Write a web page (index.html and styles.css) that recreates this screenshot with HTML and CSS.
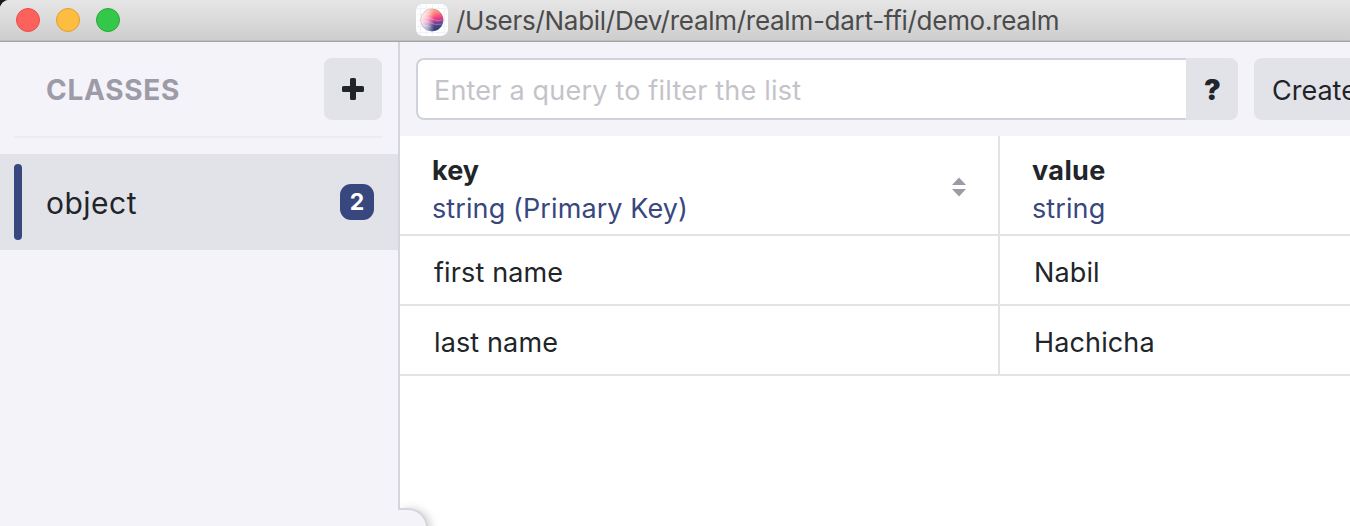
FILE: index.html
```html
<!DOCTYPE html>
<html lang="en">
<head>
<meta charset="utf-8">
<title>demo.realm</title>
<link rel="stylesheet" href="styles.css">
</head>
<body>
<div class="window">
  <header class="titlebar">
    <div class="lights"><i class="light close"></i><i class="light minimize"></i><i class="light maximize"></i></div>
    <svg class="app-icon" width="32" height="32" viewBox="0 0 32 32">
      <defs>
        <linearGradient id="globe" x1="0.35" y1="0" x2="0.55" y2="1">
          <stop offset="0" stop-color="#fcb98c"/><stop offset=".25" stop-color="#fb7f7b"/><stop offset=".46" stop-color="#f0407f"/><stop offset=".6" stop-color="#a83c96"/><stop offset=".76" stop-color="#484888"/><stop offset="1" stop-color="#333b70"/>
        </linearGradient>
        <linearGradient id="haze"><stop offset="0" stop-color="#fff" stop-opacity=".9"/><stop offset=".3" stop-color="#fff" stop-opacity=".6"/><stop offset=".6" stop-color="#fff" stop-opacity="0"/></linearGradient>
      </defs>
      <rect width="32" height="32" rx="7" fill="#fff"/>
      <path d="M4.500 1v30M10.500 1v30M16.500 1v30M22.500 1v30M28.500 1v30M1 4.500h30M1 10.500h30M1 16.500h30M1 22.500h30M1 28.500h30" stroke="#f0f0f7"/>
      <circle cx="16" cy="16" r="11.300" fill="url(#globe)"/>
      <circle cx="16" cy="16" r="11.500" fill="url(#haze)"/>
      <path d="M6 10.500q5 1 9-.5M4.800 14q6-2 11 1t11 1M4.800 18q5-2 10 1t11 1M7 22q4-1 8 1" fill="none" stroke="#fff" stroke-opacity=".35" stroke-width=".8"/>
      <circle cx="16" cy="16" r="11.200" fill="none" stroke="#73669d" stroke-opacity=".35" stroke-width=".6"/>
    </svg>
    <span class="title">/Users/Nabil/Dev/realm/realm-dart-ffi/demo.realm</span>
  </header>
  <div class="body">
    <aside class="sidebar">
      <div class="sidebar-head">
        <span class="heading">CLASSES</span>
        <button class="add"><svg width="22" height="22" viewBox="0 0 22 22"><path d="M9.500 0h3a1.500 1.500 0 0 1 1.500 1.500V8h6.500A1.500 1.500 0 0 1 22 9.500v3a1.500 1.500 0 0 1-1.500 1.500H14v6.500a1.500 1.500 0 0 1-1.500 1.500h-3A1.500 1.500 0 0 1 8 20.500V14H1.500A1.500 1.500 0 0 1 0 12.500v-3A1.500 1.500 0 0 1 1.500 8H8V1.500A1.500 1.500 0 0 1 9.500 0z" fill="#212529"/></svg></button>
      </div>
      <div class="class-item"><i class="marker"></i><span class="class-name">object</span><span class="count">2</span></div>
    </aside>
    <main class="content">
      <div class="toolbar">
        <div class="query">Enter a query to filter the list</div>
        <button class="help">?</button>
        <button class="create">Create</button>
      </div>
      <div class="table">
        <div class="th">
          <div><div class="name">key</div><div class="type">string (Primary Key)</div></div>
          <svg class="sort" width="14" height="20" viewBox="0 0 14 20"><path d="M7 .5 14 8H0zM0 12h14l-7 7.500z" fill="#9c9ba7"/></svg>
        </div>
        <div class="th"><div><div class="name name-wide">value</div><div class="type">string</div></div></div>
        <div class="td">first name</div><div class="td">Nabil</div>
        <div class="td">last name</div><div class="td">Hachicha</div>
      </div>
    </main>
  </div>
  <div class="corner"></div>
</div>
</body>
</html>
```
FILE: styles.css
```css
* { box-sizing: border-box; }
body { margin: 0; background: #1b1b1d; overflow: hidden; font-family: Inter, "Liberation Sans", sans-serif; font-size: 27px; color: #212529; white-space: nowrap; }
button { border: 0; padding: 0; font: inherit; color: inherit; background: #e2e3e8; }
.window { position: relative; display: flex; flex-direction: column; width: 1350px; height: 526px; overflow: hidden; background: #fff; border-top-left-radius: 9px; }
.titlebar { display: flex; align-items: center; height: 42px; padding: 0 0 1px 16px; background: linear-gradient(#e6e6e6, #cdcdcd); border-bottom: 1px solid #a5a5a5; box-shadow: inset 0 -1px #bdbdbd; flex: none; }
.lights { display: flex; gap: 16px; width: 400px; }
.light { width: 24px; height: 24px; border-radius: 50%; border: 1px solid; }
.close { background: #fd615c; border-color: #e2514f; }
.minimize { background: #fdbd40; border-color: #df9f34; }
.maximize { background: #34c84a; border-color: #28a935; }
.app-icon { flex: none; }
.title { margin-left: 8px; font-size: 26px; line-height: 38px; letter-spacing: -.28px; color: #4b4b4b; padding-top: 2px; }
.body { display: flex; flex: 1; min-height: 0; }
.sidebar { width: 400px; flex: none; background: #f4f3f9; border-right: 2px solid #d5d5df; }
.sidebar-head { display: flex; align-items: center; justify-content: space-between; height: 96px; margin: 0 16px 16px 14px; padding: 0 0 0 32px; border-bottom: 2px solid #ebebf0; }
.heading { font-size: 28px; font-weight: 700; letter-spacing: .7px; padding-top: 2px; color: #9c9ba7; }
.add { display: grid; place-items: center; width: 58px; height: 62px; border-radius: 8px; }
.class-item { display: flex; align-items: center; height: 96px; padding: 0 24px 0 14px; background: #e2e3e8; }
.marker { width: 8px; height: 76px; border-radius: 4px; background: #39477f; }
.class-name { flex: 1; margin-left: 24px; padding-top: 2px; font-size: 30px; letter-spacing: .5px; }
.count { width: 34px; height: 36px; border-radius: 11px; background: #39477f; color: #fff; font-size: 23px; font-weight: 700; line-height: 36px; text-align: center; }
.content { flex: 1; min-width: 0; overflow: hidden; background: #fff; }
.toolbar { display: flex; height: 94px; padding: 16px 0 0 16px; background: #f4f3f9; }
.query { width: 770px; flex: none; height: 62px; padding: 1px 0 0 16px; border: 2px solid #ced4da; border-right: 0; border-radius: 8px 0 0 8px; background: #fff; color: #c4c3ca; line-height: 60px; letter-spacing: .2px; }
.help { width: 52px; flex: none; height: 62px; border-radius: 0 8px 8px 0; font-weight: 900; font-size: 28px; padding: 2px 0 0 1px; }
.create { width: 160px; flex: none; height: 62px; margin-left: 16px; padding: 2px 0 0 18px; border-radius: 8px; text-align: left; }
.table { display: grid; grid-template-columns: 600px 600px; grid-template-rows: 100px 70px 70px; }
.th { display: flex; justify-content: space-between; align-items: flex-start; padding: 16px 32px 0; border-right: 2px solid #e3e3e4; border-bottom: 2px solid #e3e3e4; }
.name, .type { line-height: 38px; letter-spacing: .1px; }
.name { font-weight: 700; }
.name-wide { letter-spacing: .4px; }
.type { color: #39477f; }
.sort { margin-top: 25px; }
.td { padding: 2px 34px 0; line-height: 70px; border-right: 2px solid #e3e3e4; border-bottom: 2px solid #e3e3e4; letter-spacing: .13px; }
.corner { position: absolute; left: 398px; top: 508px; width: 30px; height: 40px; background: #f4f3f9; border: 2px solid #d5d5df; border-left: 0; border-top-right-radius: 20px; box-shadow: 4px 0 8px -1px rgba(0,0,0,.18); clip-path: inset(-8px -16px 0 0); }
```
